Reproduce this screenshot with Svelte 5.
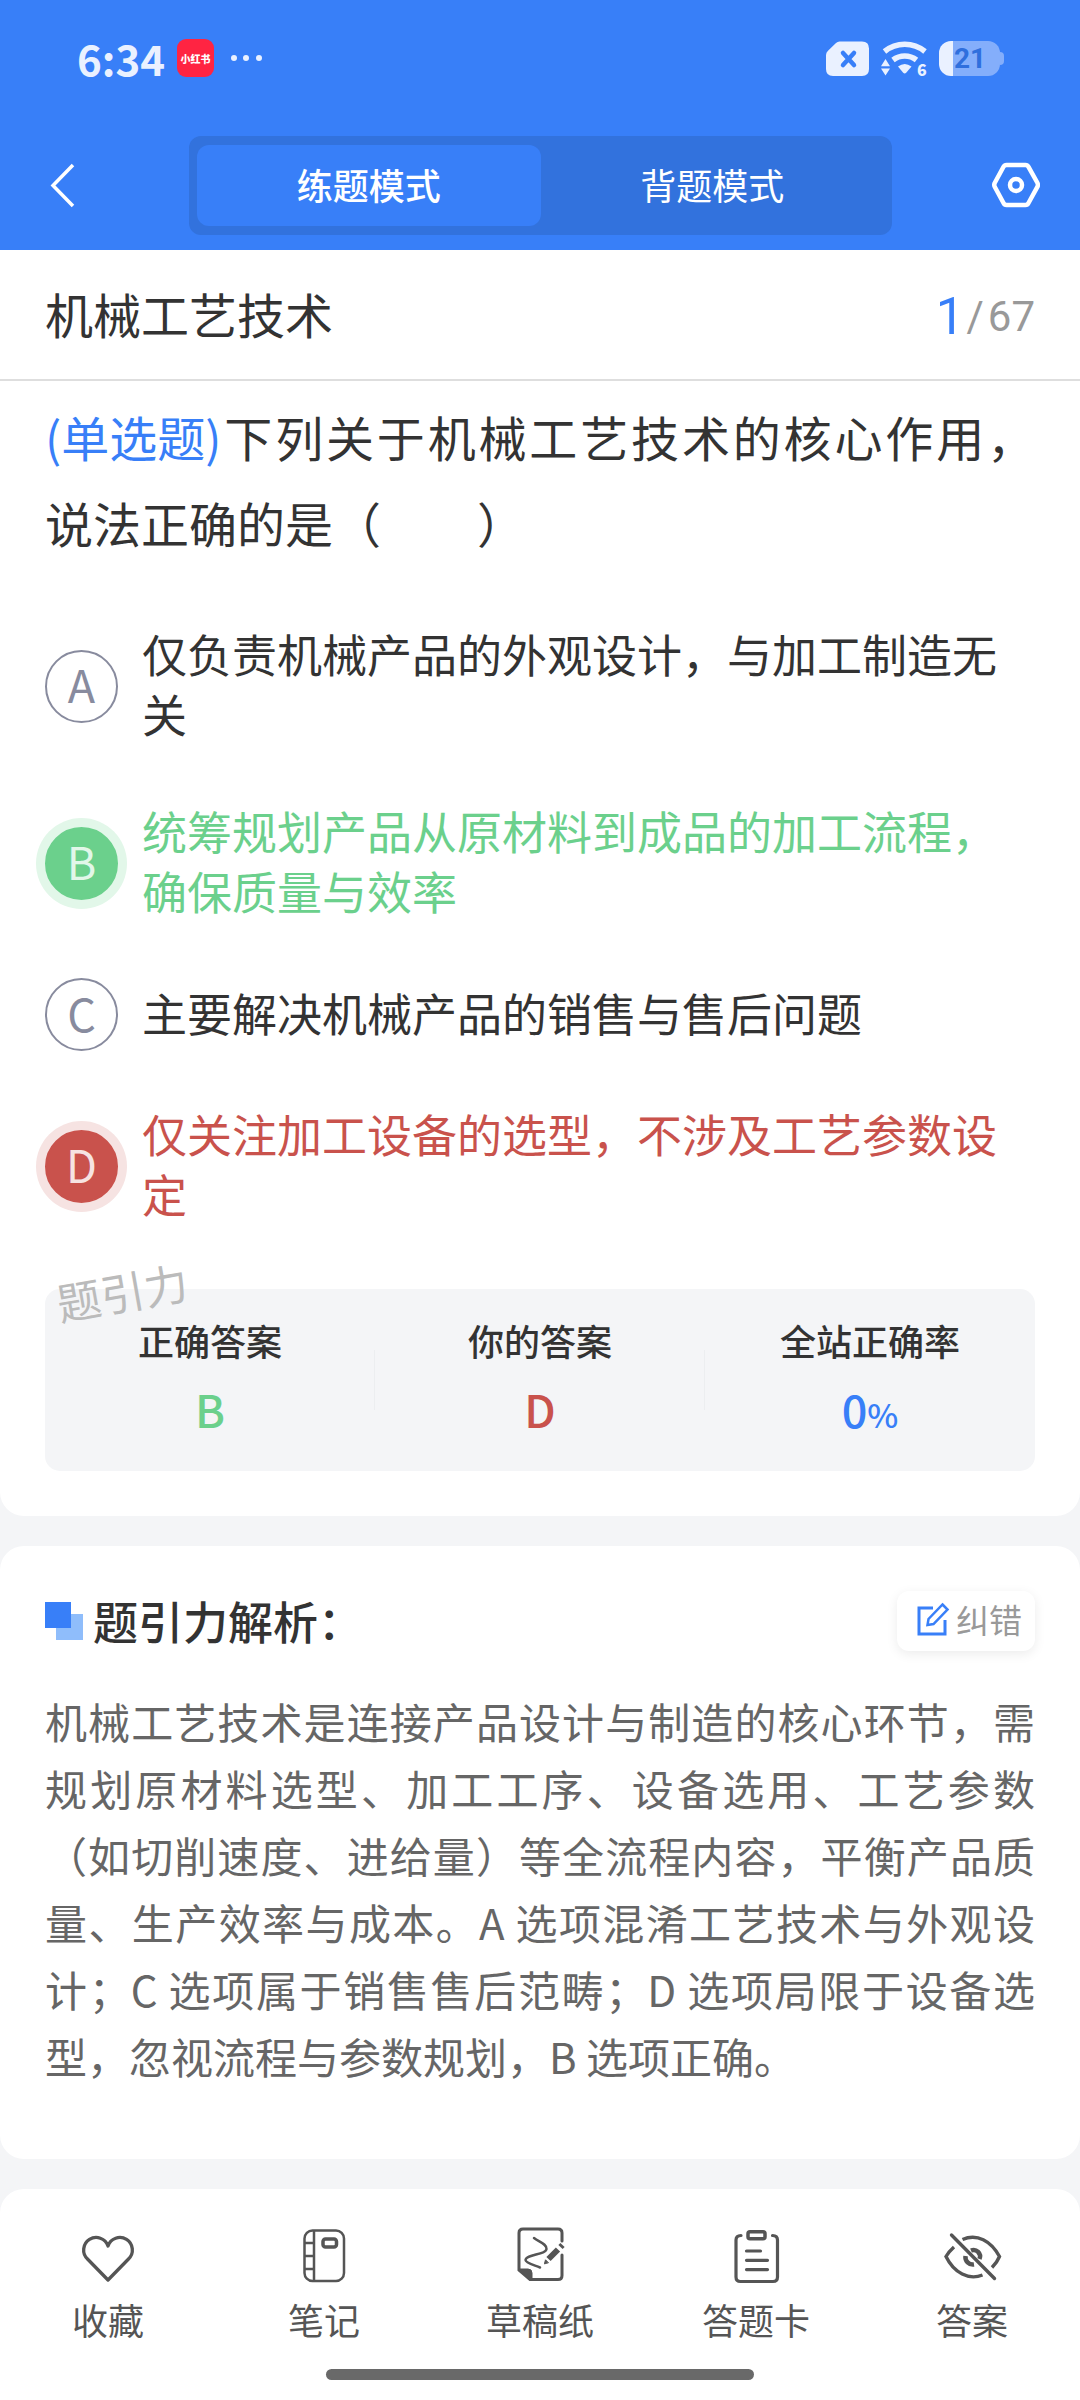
<script lang="ts">
	type Status = 'idle' | 'right' | 'wrong';

	interface Option {
		key: string;
		text: string;
		status: Status;
	}

	const options: Option[] = [
		{ key: 'A', text: '仅负责机械产品的外观设计，与加工制造无关', status: 'idle' },
		{ key: 'B', text: '统筹规划产品从原材料到成品的加工流程，确保质量与效率', status: 'right' },
		{ key: 'C', text: '主要解决机械产品的销售与售后问题', status: 'idle' },
		{ key: 'D', text: '仅关注加工设备的选型，不涉及工艺参数设定', status: 'wrong' }
	];

	const modes = ['练题模式', '背题模式'];
	const tools = ['收藏', '笔记', '草稿纸', '答题卡', '答案'];

	let mode = $state(0);
	let picked = $state('D');
</script>

<div class="page">
	<header>
		<div class="status-bar">
			<span class="time">6:34</span>
			<span class="app-badge">小红书</span>
			<svg class="dots" width="32" height="8" viewBox="0 0 32 8" fill="#eaf1ff">
				<circle cx="4" cy="4" r="3" />
				<circle cx="16" cy="4" r="3" />
				<circle cx="29" cy="4" r="3" />
			</svg>
			<div class="signals">
				<svg width="43" height="36" viewBox="0 0 43 36">
					<path
						d="M13.5 1.5 H36 Q43 1.5 43 8.5 V29 Q43 36 36 36 H7 Q0 36 0 29 V15 Q0 12.5 2 10.8 L10 3 Q11.500 1.500 13.500 1.500Z"
						fill="#eaf1ff"
					/>
					<path d="M17 13 L28 25 M28 13 L17 25" stroke="#387ff8" stroke-width="4.500" stroke-linecap="round" />
				</svg>
				<svg width="50" height="48" viewBox="0 -4 50 48">
					<g fill="none" stroke="#eaf1ff" stroke-width="5.500">
						<path d="M5.500 13.500 A32 32 0 0 1 46 13.500" />
						<path d="M14 22 A19 19 0 0 1 37.500 22" />
					</g>
					<path d="M19 28.500 Q25.700 23.500 32.500 28.500 L27.200 34.700 Q25.700 36.200 24.200 34.700Z" fill="#eaf1ff" />
					<path d="M6.500 21 L11 28.300 H2Z M2 30.500 H11 L6.500 37.500Z" fill="#eaf1ff" />
					<text x="38" y="38" class="wifi-gen">6</text>
				</svg>
				<div class="battery"><span>21</span></div>
			</div>
		</div>

		<nav class="top-nav">
			<button class="icon-btn back" aria-label="返回">
				<svg width="36" height="48" viewBox="0 0 36 48" fill="none" stroke="#fff" stroke-width="3.500">
					<path d="M28 3 L8 23.500 L28 44" />
				</svg>
			</button>
			<div class="tabs" role="tablist">
				{#each modes as label, i}
					<button role="tab" class="tab" class:active={mode === i} aria-selected={mode === i} onclick={() => (mode = i)}>
						{label}
					</button>
				{/each}
			</div>
			<button class="icon-btn settings" aria-label="设置">
				<svg width="48" height="48" viewBox="0 1 48 48" fill="none" stroke="#fff" stroke-linejoin="round">
					<path
						d="M14.500 4 H33.500 Q35.500 4 36.500 5.800 L45.500 22 Q46.300 24 45.500 25.700 L36.500 42 Q35.500 44 33.500 44 H14.500 Q12.500 44 11.500 42 L2.700 25.700 Q1.800 24 2.700 22 L11.500 5.800 Q12.500 4 14.500 4Z"
						stroke-width="4.500"
					/>
					<circle cx="24" cy="24" r="6" stroke-width="4.500" />
				</svg>
			</button>
		</nav>
	</header>

	<main>
		<section class="question-card">
			<div class="subject">
				<h1>机械工艺技术</h1>
				<p class="progress"><b>1</b><span>/</span>67</p>
			</div>

			<div class="question-body">
				<p class="stem">
					<span class="kind">(单选题)</span>下列关于机械工艺技术的核心作用，说法正确的是（　　）
				</p>

				<div class="options">
					{#each options as option}
						<label class="option {option.status}">
							<span class="mark">
								<input type="radio" name="answer" value={option.key} bind:group={picked} />
								<span class="letter">{option.key}</span>
							</span>
							<span class="option-text">{option.text}</span>
						</label>
					{/each}
				</div>

				<div class="summary">
					<span class="watermark">题引力</span>
					<div class="stat">
						<span>正确答案</span>
						<strong class="green">B</strong>
					</div>
					<div class="stat">
						<span>你的答案</span>
						<strong class="red">D</strong>
					</div>
					<div class="stat">
						<span>全站正确率</span>
						<strong class="blue">0<small>%</small></strong>
					</div>
				</div>
			</div>
		</section>

		<section class="analysis-card">
			<div class="analysis-head">
				<svg width="38" height="38" viewBox="0 0 38 38">
					<rect x="11" y="12" width="27" height="26" fill="#8fbdfb" />
					<rect width="26" height="26" fill="#387ff8" />
				</svg>
				<h2>题引力解析：</h2>
				<button class="report">
					<svg width="34" height="34" viewBox="0 0 34 34" fill="none" stroke="#387ff8" stroke-width="3">
						<path d="M17 6 H3 V32 H29 V18" />
						<path d="M26.500 2.500 L31.500 7.500 L17.500 22 L11.500 23 L12.500 17Z" stroke-width="2.500" />
					</svg>
					纠错
				</button>
			</div>
			<p class="analysis">
				机械工艺技术是连接产品设计与制造的核心环节，需规划原材料选型、加工工序、设备选用、工艺参数（如切削速度、进给量）等全流程内容，平衡产品质量、生产效率与成本。A
				选项混淆工艺技术与外观设计；C 选项属于销售售后范畴；D
				选项局限于设备选型，忽视流程与参数规划，B 选项正确。
			</p>
		</section>
	</main>

	<footer>
		<nav class="tools">
			{#each tools as tool, i}
				<button class="tool">
					<svg width="60" height="60" viewBox="-2 1 60 60" fill="none" stroke="#555" stroke-width="3" stroke-linecap="round">
						{#if i === 0}
							<path d="M28 57 L7.500 36 A12.500 12.500 0 1 1 28 23 A12.500 12.500 0 1 1 48.500 36Z" stroke-width="3.300" stroke-linejoin="round" />
						{:else if i === 1}
							<rect x="8.500" y="7.500" width="39.500" height="50.500" rx="8" stroke-width="2.500" />
							<path d="M18 8 V58 M9 20 H18 M9 33 H18 M9 46 H18" stroke-width="2.500" stroke-linecap="butt" />
							<rect x="27" y="16" width="13.500" height="8" rx="2.500" stroke-width="3.500" />
						{:else if i === 2}
							<path d="M50 18 V10 Q50 6 46 6 H11 Q7 6 7 10 V47 L18 56.500 H46 Q50 56.500 50 52.500 V32" />
							<path d="M7 46 H16 Q20 46 20 50 V57 H18Z" fill="#555" stroke-width="1" />
							<path d="M22 15 C27 19 35 21 34.500 26 C34 32 14 31 13.500 37 C13.500 40 22 42 28 44.500" stroke-width="2.500" />
							<path d="M36.500 36 L46 26.500" stroke-width="6" stroke-linecap="butt" />
							<path d="M48.500 24 L50.500 22" stroke-width="6" stroke-linecap="butt" />
							<path d="M32.500 40.500 L33.500 36.800 L36.200 39.500Z" fill="#555" stroke-width="1" />
						{:else if i === 3}
							<path d="M13 12.500 Q8 12.500 8 17 V54 Q8 58.500 12.500 58.500 H45 Q49.500 58.500 49.500 54 V17 Q49.500 12.500 44.500 12.500" stroke-width="3.200" />
							<rect x="20" y="8.700" width="17" height="7" rx="2" stroke-width="3.500" />
							<path d="M18.500 28 H32.500 M18.500 37.300 H39.500 M18.500 46.600 H39.500" stroke-width="3.200" />
						{:else}
							<path d="M18.500 16.500 C33 10 47 18 55.500 33.500 Q53 39.500 48 44.500" stroke-width="3.400" stroke-linecap="butt" />
							<path d="M10 24 Q5 28.500 2 33.500 C10 50 25 57.500 38.500 52" stroke-width="3.400" stroke-linecap="butt" />
							<path d="M27 27.500 A6.500 6.500 0 0 1 35.500 36" stroke-width="4.500" stroke-linecap="butt" />
							<path d="M21.500 33 A7.500 7.500 0 0 0 30 41.500" stroke-width="4.500" stroke-linecap="butt" />
							<path d="M7.500 12 L50.500 55.500" stroke-width="3.400" />
						{/if}
					</svg>
					<span>{tool}</span>
				</button>
			{/each}
		</nav>
		<div class="home-bar"></div>
	</footer>
</div>

<style>
	:global(body) {
		margin: 0;
		background: #f4f5f7;
	}

	.page {
		display: flex;
		flex-direction: column;
		min-height: 100vh;
		color: #333;
		font-family: 'Noto Sans CJK SC', 'Noto Sans', sans-serif;
	}

	button {
		padding: 0;
		border: none;
		background: none;
		font-family: inherit;
		cursor: pointer;
	}

	h1,
	h2,
	p {
		margin: 0;
	}

	svg {
		display: block;
		flex: none;
	}

	header {
		background: #387ff8;
	}

	.status-bar {
		display: flex;
		align-items: center;
		height: 116px;
		padding: 0 80px 0 77px;
	}

	.time {
		color: #eaf1ff;
		font-size: 42px;
		font-weight: 700;
		line-height: 48px;
	}

	.app-badge {
		display: flex;
		align-items: center;
		justify-content: center;
		width: 37px;
		height: 38px;
		margin: 0 16px 0 12px;
		border-radius: 9px;
		background: #ff2442;
		color: #fff;
		font-size: 10px;
		font-weight: 900;
	}

	.signals {
		display: flex;
		align-items: center;
		gap: 10px;
		margin-left: auto;
	}

	.wifi-gen {
		fill: #eaf1ff;
		font-size: 16px;
		font-weight: 900;
	}

	.battery {
		display: flex;
		align-items: center;
		width: 61px;
		height: 35px;
		border-radius: 12px;
		background: linear-gradient(90deg, #eaf1ff 14px, #84aefb 14px);
	}

	.battery span {
		margin-left: 15px;
		color: #2f6fdd;
		font-family: Roboto, sans-serif;
		font-size: 28px;
		font-weight: 700;
		line-height: 35px;
	}

	.battery::after {
		content: '';
		width: 4px;
		height: 13px;
		margin-left: auto;
		margin-right: -4px;
		border-radius: 0 4px 4px 0;
		background: #84aefb;
	}

	.top-nav {
		display: grid;
		grid-template-columns: 189px 1fr 188px;
		padding: 20px 0 15px;
	}

	.icon-btn {
		display: flex;
		align-items: center;
	}

	.back {
		padding-left: 45px;
	}

	.settings {
		justify-content: flex-end;
		padding-right: 40px;
	}

	.tabs {
		display: grid;
		grid-template-columns: 1fr 1fr;
		padding: 9px 8px;
		border-radius: 12px;
		background: #3272dd;
	}

	.tab {
		height: 81px;
		padding-bottom: 4px;
		border-radius: 12px;
		color: #fff;
		font-size: 36px;
	}

	.tab.active {
		background: #387ff8;
		font-weight: 500;
	}

	main {
		display: flex;
		flex-direction: column;
		gap: 30px;
		margin-bottom: 30px;
	}

	.question-card {
		border-radius: 0 0 24px 24px;
		background: #fff;
	}

	.subject {
		display: flex;
		align-items: center;
		justify-content: space-between;
		height: 125px;
		padding: 0 45px 4px;
		border-bottom: 2px solid #dedede;
	}

	h1 {
		font-size: 48px;
		font-weight: 400;
	}

	.progress {
		display: flex;
		align-items: center;
		padding-top: 8px;
		color: #999;
		font-family: Roboto, sans-serif;
		font-size: 42px;
		line-height: 60px;
	}

	.progress b {
		color: #387ff8;
		font-size: 51px;
		font-weight: 400;
	}

	.progress span {
		margin: 0 4px 0 2px;
	}

	.question-body {
		padding: 12px 45px 45px;
	}

	.stem {
		font-size: 48px;
		line-height: 86px;
		text-align: justify;
	}

	.kind {
		display: inline-block;
		color: #387ff8;
	}

	.options {
		display: flex;
		flex-direction: column;
		gap: 53px;
		margin: 59px 0 61px;
	}

	.option {
		display: flex;
		align-items: center;
		gap: 24px;
		cursor: pointer;
	}

	.option-text {
		padding-bottom: 4px;
		font-size: 45px;
		line-height: 60px;
	}

	.mark {
		display: grid;
		flex: none;
		place-items: center;
		width: 73px;
		height: 73px;
		color: #888b9e;
	}

	.mark input,
	.letter {
		grid-area: 1 / 1;
	}

	.mark input {
		width: 73px;
		height: 73px;
		margin: 0;
		border: 2px solid #888b9e;
		border-radius: 50%;
		appearance: none;
	}

	.letter {
		padding-bottom: 4px;
		font-size: 45px;
		line-height: 60px;
	}

	.right .option-text {
		color: #6bd08c;
	}

	.right input {
		border-color: #6bd08c;
		background: #6bd08c;
		box-shadow: 0 0 0 9px #e2f7e9;
	}

	.right .letter {
		color: #e2f7e9;
	}

	.wrong .option-text {
		color: #c9524c;
	}

	.wrong input {
		border-color: #c9524c;
		background: #c9524c;
		box-shadow: 0 0 0 9px #f6e3e2;
	}

	.wrong .letter {
		color: #f6e3e2;
	}

	.summary {
		position: relative;
		display: grid;
		grid-template-columns: repeat(3, 1fr);
		padding: 24px 0 32px;
		border-radius: 15px;
		background: #f4f5f7;
	}

	.watermark {
		position: absolute;
		top: -28px;
		left: 11px;
		color: #bbb;
		font-size: 44px;
		line-height: 60px;
		transform: rotate(-10deg);
	}

	.stat {
		display: flex;
		flex-direction: column;
		align-items: center;
		gap: 12px;
		font-size: 36px;
		font-weight: 500;
		line-height: 54px;
		background: linear-gradient(#eceef0, #eceef0) right 37px / 1px 60px no-repeat;
	}

	.stat:last-child {
		background: none;
	}

	.stat strong {
		font-size: 45px;
		font-weight: 500;
		line-height: 60px;
	}

	.stat small {
		font-size: 33px;
		line-height: 33px;
	}

	.green {
		color: #6bd08c;
	}

	.red {
		color: #c9524c;
	}

	.blue {
		color: #387ff8;
	}

	.analysis-card {
		padding: 45px 45px 70px;
		border-radius: 24px;
		background: #fff;
	}

	.analysis-head {
		display: flex;
		align-items: center;
		gap: 10px;
	}

	h2 {
		font-size: 45px;
		font-weight: 500;
		line-height: 60px;
	}

	.report {
		display: flex;
		align-items: center;
		justify-content: center;
		gap: 6px;
		width: 138px;
		height: 60px;
		margin-left: auto;
		padding: 0 0 4px 6px;
		border-radius: 12px;
		background: #fff;
		box-shadow: 0 3px 12px rgba(0, 0, 0, 0.08);
		color: #999;
		font-size: 33px;
	}

	.analysis {
		margin-top: 36px;
		color: #666;
		font-size: 42px;
		line-height: 67px;
		text-align: justify;
	}

	footer {
		margin-top: auto;
		padding: 35px 0 20px;
		border-radius: 24px 24px 0 0;
		background: #fff;
	}

	.tools {
		display: grid;
		grid-template-columns: repeat(5, 1fr);
	}

	.tool {
		display: flex;
		flex-direction: column;
		align-items: center;
		gap: 14px;
		color: #555;
		font-size: 36px;
		line-height: 42px;
	}

	.home-bar {
		width: 40%;
		max-width: 428px;
		height: 11px;
		margin: 29px auto 0;
		border-radius: 6px;
		background: #696969;
	}
</style>
